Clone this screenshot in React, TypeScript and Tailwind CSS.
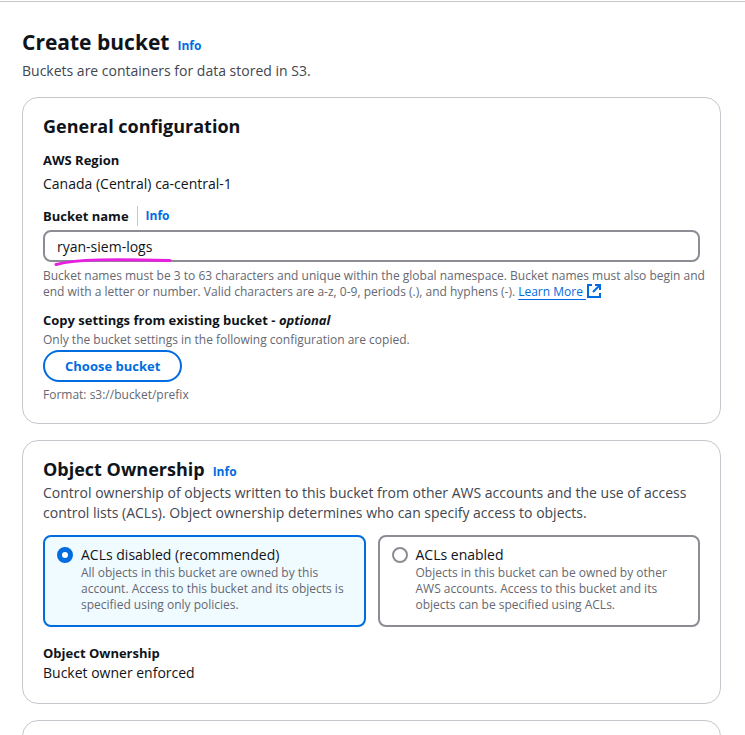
import { useState, type ReactNode } from 'react';

function InfoLink() {
  return (
    <a href="#info" className="text-xs leading-4 font-bold text-[#006ce0]">
      Info
    </a>
  );
}

function Card({ children }: { children?: ReactNode }) {
  return (
    <section className="rounded-2xl border border-[#c6c6cd] bg-white px-5 pt-4 pb-5">
      {children}
    </section>
  );
}

function ExternalIcon() {
  return (
    <svg viewBox="0 0 16 16" className="-my-1 inline-block h-4 w-4 align-[1px]" fill="none" stroke="#006ce0" strokeWidth="2" aria-hidden="true">
      <path d="M6 2H2v12h12v-4" />
      <path d="M9 2h5v5" />
      <path d="M14 2 7 9" />
    </svg>
  );
}

type TileProps = {
  value: string;
  title: string;
  text: string;
  selected: string;
  onSelect: (value: string) => void;
};

function Tile({ value, title, text, selected, onSelect }: TileProps) {
  const active = selected === value;
  return (
    <label
      className={
        active
          ? 'flex gap-2 rounded-lg border-2 border-[#006ce0] bg-[#f0fbff] px-3 pt-2 pb-3'
          : 'flex gap-2 rounded-lg border-2 border-[#8c8c94] bg-white px-3 pt-2 pb-3'
      }
    >
      <input
        type="radio"
        name="ownership"
        value={value}
        checked={active}
        onChange={() => onSelect(value)}
        className="mt-0.5 h-4 w-4 shrink-0 appearance-none rounded-full border-2 border-[#8c8c94] bg-white checked:border-[5px] checked:border-[#006ce0]"
      />
      <span className="block">
        <span className="block text-sm leading-5 text-[#0f141a]">{title}</span>
        <span className="block text-xs leading-4 text-[#656871]">{text}</span>
      </span>
    </label>
  );
}

export default function App() {
  const [name, setName] = useState('ryan-siem-logs');
  const [ownership, setOwnership] = useState('disabled');

  return (
    <div className="h-screen overflow-hidden bg-white pt-px font-['Open_Sans',sans-serif] text-sm leading-5 text-[#0f141a]">
      <main className="border-t border-[#c6c6cd] pt-[23px] pr-6 pl-[22px]">
        <header>
          <div className="flex items-baseline gap-2">
            <h1 className="text-[21px] leading-[34px] font-bold">Create bucket</h1>
            <InfoLink />
          </div>
          <p className="mt-0.5 text-[#424650]">Buckets are containers for data stored in S3.</p>
        </header>

        <div className="mt-4 flex flex-col gap-4">
          <Card>
            <h2 className="text-lg leading-6 font-bold">General configuration</h2>

            <dl className="mt-3">
              <dt className="text-[13px] leading-5 font-bold">AWS Region</dt>
              <dd className="mt-1">Canada (Central) ca-central-1</dd>
            </dl>

            <div className="mt-3 flex items-center">
              <label htmlFor="bucket-name" className="text-[13px] leading-5 font-bold">
                Bucket name
              </label>
              <span className="ml-2 flex h-5 items-center border-l border-[#c6c6cd] pl-2">
                <InfoLink />
              </span>
            </div>
            <div className="relative mt-1">
              <input
                id="bucket-name"
                type="text"
                value={name}
                onChange={(e) => setName(e.target.value)}
                className="block h-8 w-full rounded-lg border-2 border-[#8c8c94] px-3 text-sm"
              />
              <svg viewBox="0 0 120 10" className="pointer-events-none absolute top-[27px] left-[10px] h-2.5 w-[120px]" fill="none" aria-hidden="true">
                <path d="M3 7.500C24 2 60 2 117 3.500" stroke="#e81fe0" strokeWidth="3" strokeLinecap="round" />
              </svg>
            </div>
            <p className="mt-1.5 -mr-2 text-xs leading-4 text-[#656871]">
              Bucket names must be 3 to 63 characters and unique within the global namespace. Bucket names must also begin and
              end with a letter or number. Valid characters are a-z, 0-9, periods (.), and hyphens (-).{' '}
              <a href="#learn" className="whitespace-nowrap text-[#006ce0] underline underline-offset-3">
                Learn More <ExternalIcon />
              </a>
            </p>

            <h3 className="mt-2.5 text-[13px] leading-5 font-bold">
              Copy settings from existing bucket - <i>optional</i>
            </h3>
            <p className="mt-0.5 text-xs leading-4 text-[#656871]">
              Only the bucket settings in the following configuration are copied.
            </p>
            <button type="button" className="mt-0.5 block h-8 rounded-full border-2 border-[#006ce0] px-5 text-[13px] font-bold text-[#006ce0]">
              Choose bucket
            </button>
            <p className="mt-[5px] text-xs leading-4 text-[#656871]">Format: s3://bucket/prefix</p>
          </Card>

          <Card>
            <div className="flex items-baseline gap-2">
              <h2 className="text-lg leading-6 font-bold">Object Ownership</h2>
              <InfoLink />
            </div>
            <p className="mt-0.5 text-[#424650]">
              Control ownership of objects written to this bucket from other AWS accounts and the use of access control lists
              (ACLs). Object ownership determines who can specify access to objects.
            </p>
            <div className="mt-3 grid grid-cols-2 gap-3">
              <Tile
                value="disabled"
                title="ACLs disabled (recommended)"
                text="All objects in this bucket are owned by this account. Access to this bucket and its objects is specified using only policies."
                selected={ownership}
                onSelect={setOwnership}
              />
              <Tile
                value="enabled"
                title="ACLs enabled"
                text="Objects in this bucket can be owned by other AWS accounts. Access to this bucket and its objects can be specified using ACLs."
                selected={ownership}
                onSelect={setOwnership}
              />
            </div>
            <dl className="mt-4">
              <dt className="text-[13px] leading-5 font-bold">Object Ownership</dt>
              <dd>Bucket owner enforced</dd>
            </dl>
          </Card>

          <Card />
        </div>
      </main>
    </div>
  );
}
